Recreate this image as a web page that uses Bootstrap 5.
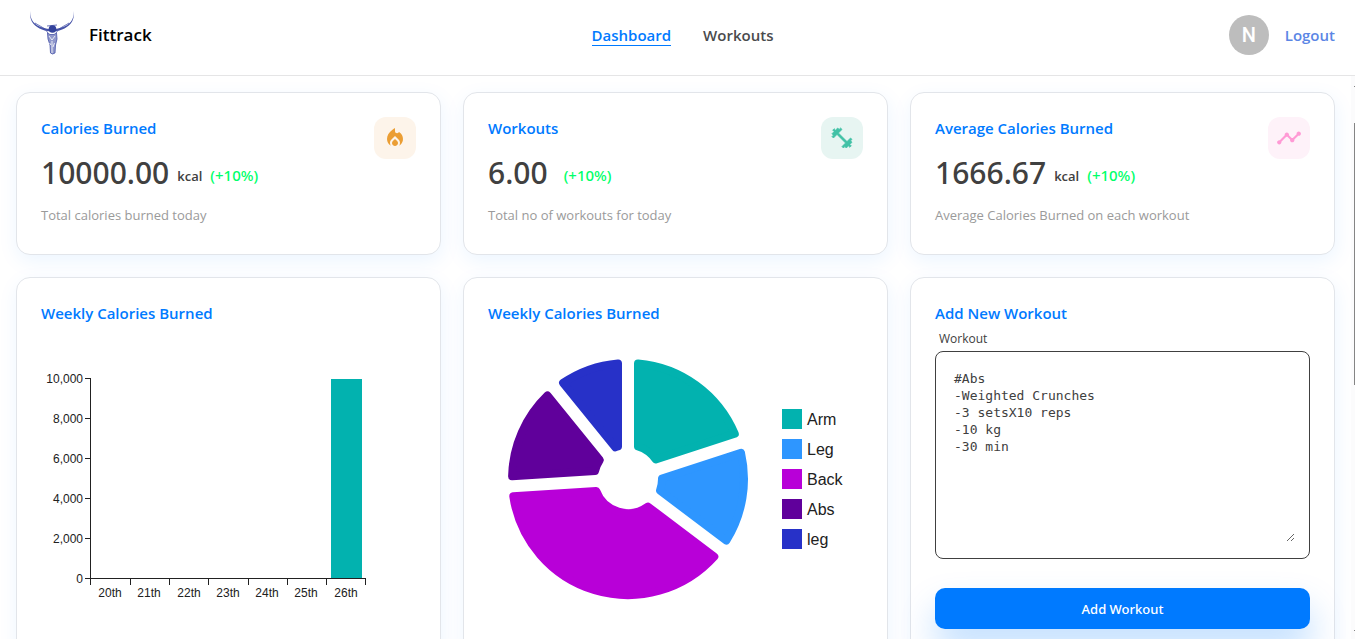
<!DOCTYPE html>
<html lang="en">
<head>
<meta charset="utf-8">
<meta name="viewport" content="width=device-width, initial-scale=1">
<title>Fittrack</title>
<link href="https://cdn.jsdelivr.net/npm/bootstrap@5.3.0/dist/css/bootstrap.min.css" rel="stylesheet">
<style>
  body { font-family: "Open Sans", "Noto Sans", sans-serif; color: #404040; background: #fff; }
  .topbar { height: 76px; padding: 0 0 5px 26px; border-bottom: 1px solid #e5e5e6; }
  .topbar .side { flex: 1 1 0; }
  .brand-name { font-size: 17px; font-weight: 600; color: #000; }
  .menu-link { font-size: 15px; line-height: 20px; font-weight: 600; color: #4a4b4d; text-decoration: none; border-bottom: 1px solid transparent; }
  .menu-link.active { color: #007aff; border-color: #007aff; }
  .user-badge { width: 40px; height: 40px; background: #bdbdbd; color: #fff; font: 500 20px Roboto, sans-serif; }
  .logout { font-size: 15px; font-weight: 600; color: #5b86e5; text-decoration: none; }
  .board { padding: 16px 16px 40px; }
  .board .row { --bs-gutter-x: 22px; --bs-gutter-y: 22px; }
  .panel { padding: 24px; border: 1px solid #e2e5ea; border-radius: 14px; background: #fff; box-shadow: 1px 6px 20px 0 rgba(0,122,255,.08); }
  .stat { min-height: 163px; }
  .panel-title { font-size: 15px; line-height: 22px; font-weight: 600; color: #007aff; margin: 0; }
  .figure-row { margin: 12px 0 10px; }
  .figure-value { font: 500 30px/44px "Noto Sans", "Open Sans", sans-serif; }
  .unit { font-size: 13px; font-weight: 600; }
  .gain { font: 500 15px/22px "Noto Sans", "Open Sans", sans-serif; color: #00ff6a; }
  .note { font-size: 13px; line-height: 20px; color: #9a9a9a; }
  .tile { width: 42px; height: 42px; border-radius: 12px; }
  .chart { display: block; max-width: 100%; margin-top: 5px; font-family: "Liberation Sans", Arial, sans-serif; }
  .field-label { font-size: 12px; line-height: 16px; padding: 0 4px; margin: 7px 0 4px; }
  .field-box { border: 1px solid #404040; border-radius: 8px; padding: 16px 14px; }
  .field-box textarea { display: block; width: 100%; height: 174px; border: 0; padding: 2px 4px; outline: 0; resize: vertical; background: none; color: #404040; font: 13px/17px "DejaVu Sans Mono", monospace; }
  .add-btn { height: 41px; margin-top: 29px; border: 0; border-radius: 10px; background: #007aff; color: #fff; font: 500 13px "Noto Sans", "Open Sans", sans-serif; box-shadow: 1px 20px 35px 0 rgba(0,122,255,.25); }
  .scroll-rail { width: 4px; background: #fbfbfc; padding: 10px 0 8px; }
  .scroll-rail span { display: block; width: 1px; height: 1px; background: #858585; }
  .scroll-rail .thumb { height: 262px; margin: 36px 0 auto; }
</style>
</head>
<body class="vh-100 overflow-hidden d-flex flex-column">
<header class="topbar d-flex align-items-center flex-shrink-0">
  <div class="side d-flex align-items-center">
    <svg width="55" height="60" viewBox="1 0 55 60" aria-hidden="true" fill="none" stroke="#4653a8">
      <path d="M5.500 6c-1 9 4 14 12 16.500 3 1 6 1.500 9 1.500l-1 2.500c-4-.5-8-1.500-11-3C8 20 4 15 5.500 6zM48.500 6c1 9-4 14-12 16.500-3 1-6 1.500-9 1.500l1 2.500c4-.5 8-1.500 11-3C46 20 50 15 48.500 6z" fill="#4653a8" stroke="none"/>
      <path d="M10 18c6 4 9 4 13 10M44 18c-6 4-9 4-13 10" stroke-width=".8"/>
      <path d="M22 21l10-1" stroke-width=".8"/>
      <circle cx="27.500" cy="24" r="3.800" fill="#34439c" stroke="none"/>
      <path d="M22.500 28l2.500 1.500h4l2.500-1.500.5 6-1.500 6-.5 8-2.500 1-2-1-.5-8-2-6z" fill="#4653a8" fill-opacity=".6" stroke-width=".8"/>
      <path d="M24 31l3 4 3-4M27 36v12M24.500 38l1.500 2M29.500 38L28 42" stroke="#fff" stroke-width=".8"/>
    </svg>
    <span class="brand-name ms-2">Fittrack</span>
  </div>
  <nav class="d-flex gap-4" aria-label="Main">
    <a class="menu-link active me-2" href="#">Dashboard</a>
    <a class="menu-link" href="#">Workouts</a>
  </nav>
  <div class="side d-flex align-items-center justify-content-end gap-3 pe-3">
    <span class="user-badge rounded-circle d-flex align-items-center justify-content-center">N</span>
    <a class="logout me-1" href="#">Logout</a>
  </div>
</header>

<div class="d-flex flex-fill overflow-hidden">
<main class="board flex-fill">
  <div class="row row-cols-3">
    <div class="col">
      <section class="panel stat h-100 d-flex justify-content-between">
        <div>
          <h2 class="panel-title">Calories Burned</h2>
          <div class="figure-row d-flex align-items-center gap-2"><span class="figure-value">10000.00</span><span class="d-flex align-items-baseline gap-2 pt-1"><span class="unit">kcal</span><span class="gain">(+10%)</span></span></div>
          <div class="note">Total calories burned today</div>
        </div>
        <div class="tile d-flex align-items-center justify-content-center flex-shrink-0" style="background:#fdf4ea">
          <svg width="24" height="24" viewBox="0 0 24 24" fill="#eb9e34" aria-hidden="true"><path d="M16 6l-.44.55C14.380 8.020 12 7.190 12 5.300V2S4 6 4 13c0 2.920 1.560 5.470 3.890 6.860-.56-.79-.89-1.760-.89-2.800 0-1.320.52-2.560 1.470-3.500L12 10.100l3.530 3.470c.95.93 1.470 2.170 1.470 3.500 0 1.020-.31 1.960-.85 2.750 1.890-1.150 3.290-3.060 3.710-5.300.66-3.550-1.070-6.900-3.860-8.520z"/><path d="M12 12.900l-2.130 2.090C9.310 15.550 9 16.280 9 17.060 9 18.680 10.350 20 12 20s3-1.320 3-2.940c0-.78-.31-1.520-.87-2.070z"/></svg>
        </div>
      </section>
    </div>
    <div class="col">
      <section class="panel stat h-100 d-flex justify-content-between">
        <div>
          <h2 class="panel-title">Workouts</h2>
          <div class="figure-row d-flex align-items-center gap-3"><span class="figure-value">6.00</span><span class="gain pt-1">(+10%)</span></div>
          <div class="note">Total no of workouts for today</div>
        </div>
        <div class="tile d-flex align-items-center justify-content-center flex-shrink-0" style="background:#e7f5f2">
          <svg width="24" height="24" viewBox="0 0 24 24" fill="#41c1a6" stroke="#41c1a6" stroke-width=".8" aria-hidden="true"><path d="M20.570 14.860L22 13.430 20.570 12 17 15.570 8.430 7 12 3.430 10.570 2 9.140 3.430 7.710 2 5.570 4.140 4.140 2.710 2.710 4.140l1.430 1.430L2 7.710l1.430 1.430L2 10.570 3.430 12 7 8.430 15.570 17 12 20.570 13.430 22l1.430-1.430L16.290 22l2.140-2.140 1.430 1.430 1.430-1.430-1.430-1.430L22 16.290z"/></svg>
        </div>
      </section>
    </div>
    <div class="col">
      <section class="panel stat h-100 d-flex justify-content-between">
        <div>
          <h2 class="panel-title">Average Calories Burned</h2>
          <div class="figure-row d-flex align-items-center gap-2"><span class="figure-value">1666.67</span><span class="d-flex align-items-baseline gap-2 pt-1"><span class="unit">kcal</span><span class="gain">(+10%)</span></span></div>
          <div class="note">Average Calories Burned on each workout</div>
        </div>
        <div class="tile d-flex align-items-center justify-content-center flex-shrink-0" style="background:#fef2f9">
          <svg width="26" height="26" viewBox="0 0 24 24" fill="#ff9ad5" aria-hidden="true"><path d="M23 8c0 1.100-.9 2-2 2-.18 0-.35-.02-.51-.07l-3.560 3.550c.05.16.07.34.07.52 0 1.100-.9 2-2 2s-2-.9-2-2c0-.18.02-.36.07-.52l-2.550-2.550c-.16.05-.34.07-.52.07s-.36-.02-.52-.07l-4.550 4.560c.05.16.07.33.07.51 0 1.100-.9 2-2 2s-2-.9-2-2 .9-2 2-2c.18 0 .35.02.51.07l4.560-4.550C8.020 9.360 8 9.180 8 9c0-1.100.9-2 2-2s2 .9 2 2c0 .18-.02.36-.07.52l2.550 2.550c.16-.05.34-.07.52-.07s.36.02.52.07l3.550-3.560C19.020 8.350 19 8.180 19 8c0-1.100.9-2 2-2s2 .9 2 2z"/></svg>
        </div>
      </section>
    </div>

    <div class="col">
      <section class="panel h-100">
        <h2 class="panel-title">Weekly Calories Burned</h2>
        <svg class="chart" width="375" height="300" viewBox="0 0 375 300" role="img" aria-label="Calories burned per day">
          <rect x="290" y="50" width="31" height="199" fill="#02b2af"/>
          <path d="M44 49.500h5.500v206M44 89.500h5M44 129.500h5M44 169.500h5M44 209.500h5M44 249.500h280.500v6M89.500 250v6M128.500 250v6M167.500 250v6M207.500 250v6M246.500 250v6M285.500 250v6" fill="none" stroke="#212121" shape-rendering="crispEdges"/>
          <g font-size="12" fill="#212121" text-anchor="end"><text x="42" y="54">10,000</text><text x="42" y="94">8,000</text><text x="42" y="134">6,000</text><text x="42" y="174">4,000</text><text x="42" y="214">2,000</text><text x="42" y="254">0</text></g>
          <g font-size="12" fill="#212121" text-anchor="middle"><text x="69" y="268">20th</text><text x="108" y="268">21th</text><text x="148" y="268">22th</text><text x="187" y="268">23th</text><text x="226" y="268">24th</text><text x="265" y="268">25th</text><text x="305" y="268">26th</text></g>
        </svg>
      </section>
    </div>
    <div class="col">
      <section class="panel h-100">
        <h2 class="panel-title">Weekly Calories Burned</h2>
        <svg class="chart" width="375" height="300" viewBox="0 0 375 300" role="img" aria-label="Calories burned by muscle group">
          <g transform="translate(140 150)" stroke-width="8" stroke-linejoin="round">
            <path fill="#02b2af" stroke="#02b2af" d="M10-115.600A116 116 0 0 1 106.800-45.200L27.800-19.500A34 34 0 0 0 10-32.500z"/>
            <path fill="#2e96ff" stroke="#2e96ff" d="M113-26.200A116 116 0 0 1 98.300 61.600L32 11.600A34 34 0 0 0 34-.5z"/>
            <path fill="#b800d8" stroke="#b800d8" d="M86.300 77.600A116 116 0 0 1-114.700 17.300L-31.800 12A34 34 0 0 0 20 27.600z"/>
            <path fill="#60009b" stroke="#60009b" d="M-115.900-2.700A116 116 0 0 1-80.500-83.500L-28.200-19A34 34 0 0 0-33-8z"/>
            <path fill="#2731c8" stroke="#2731c8" d="M-64.900-96.100A116 116 0 0 1-10-115.600L-10-32.500A34 34 0 0 0-12.600-31.600z"/>
          </g>
          <g><rect x="294" y="80" width="20" height="20" fill="#02b2af"/><rect x="294" y="110" width="20" height="20" fill="#2e96ff"/><rect x="294" y="140" width="20" height="20" fill="#b800d8"/><rect x="294" y="170" width="20" height="20" fill="#60009b"/><rect x="294" y="200" width="20" height="20" fill="#2731c8"/></g>
          <g font-size="16" fill="#212121"><text x="319" y="96">Arm</text><text x="319" y="126">Leg</text><text x="319" y="156">Back</text><text x="319" y="186">Abs</text><text x="319" y="216">leg</text></g>
        </svg>
      </section>
    </div>
    <div class="col">
      <section class="panel h-100">
        <h2 class="panel-title">Add New Workout</h2>
        <form>
          <label class="field-label d-block" for="workout">Workout</label>
          <div class="field-box"><textarea id="workout" spellcheck="false">#Abs
-Weighted Crunches
-3 setsX10 reps
-10 kg
-30 min</textarea></div>
          <button class="add-btn w-100" type="button">Add Workout</button>
        </form>
      </section>
    </div>
  </div>
</main>
<div class="scroll-rail d-flex flex-column align-items-end flex-shrink-0" aria-hidden="true"><span></span><span class="thumb"></span><span></span></div>
</div>
<script src="https://cdn.jsdelivr.net/npm/bootstrap@5.3.0/dist/js/bootstrap.bundle.min.js"></script>
</body>
</html>
